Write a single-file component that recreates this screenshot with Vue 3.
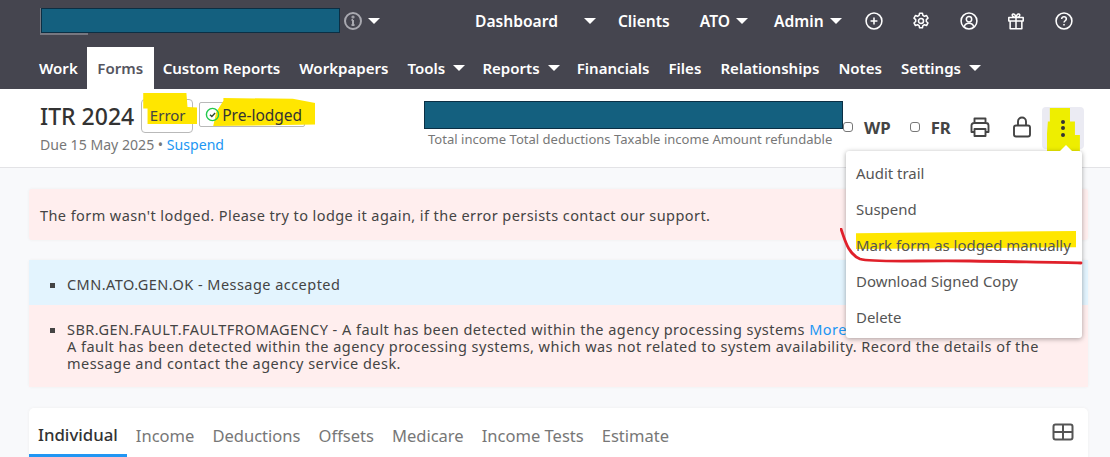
<script setup>
const mainNav = [
  { label: 'Work' }, { label: 'Forms', active: true }, { label: 'Custom Reports' }, { label: 'Workpapers' },
  { label: 'Tools', caret: true }, { label: 'Reports', caret: true }, { label: 'Financials' }, { label: 'Files' },
  { label: 'Relationships' }, { label: 'Notes' }, { label: 'Settings', caret: true }
]
const menu = ['Audit trail', 'Suspend', 'Mark form as lodged manually', 'Download Signed Copy', 'Delete']
const tabs = ['Individual', 'Income', 'Deductions', 'Offsets', 'Medicare', 'Income Tests', 'Estimate']
</script>

<template>
  <div class="page">
    <header class="header">
      <div class="top">
        <div class="brand">
          <div class="redact top-redact"></div>
          <svg class="info" width="20" height="20" viewBox="0 0 20 20" fill="none" stroke="#a9a9b0" stroke-width="2"><circle cx="10" cy="10" r="8"/><path d="M10 9v5M8.5 14h3M8.5 9H10"/><circle cx="10" cy="6" r=".6"/></svg>
          <span class="caret brand-caret"></span>
        </div>
        <nav class="top-nav">
          <span class="tn dash">Dashboard</span><span class="caret dash-caret"></span>
          <span class="tn clients">Clients</span>
          <span class="tn ato">ATO<span class="caret in"></span></span>
          <span class="tn admin">Admin<span class="caret in"></span></span>
          <svg class="ic" viewBox="0 0 20 20" fill="none" stroke="#fff" stroke-width="1.7"><circle cx="10" cy="10" r="8.800"/><path d="M10 6.200v7.600M6.200 10h7.600"/></svg>
          <svg class="ic gear" viewBox="0 0 20 20" fill="none" stroke="#fff" stroke-width="1.7"><path d="M8.400 1.400h3.200l.5 2.400 1.700 1 2.400-.8 1.600 2.800-1.900 1.700v2l1.900 1.700-1.600 2.800-2.400-.8-1.700 1-.5 2.400H8.400l-.5-2.400-1.700-1-2.400.8-1.600-2.800 1.900-1.700v-2L2.200 6.800l1.600-2.800 2.400.8 1.700-1z" stroke-linejoin="round"/><circle cx="10" cy="10" r="2.800"/></svg>
          <svg class="ic" viewBox="0 0 20 20" fill="none" stroke="#fff" stroke-width="1.700"><circle cx="10" cy="10" r="8.800"/><circle cx="10" cy="8" r="3"/><path d="M4.800 16.400c.6-2.600 2.700-3.800 5.200-3.800s4.600 1.200 5.200 3.800"/></svg>
          <svg class="ic" viewBox="0 0 20 20" fill="none" stroke="#fff" stroke-width="1.700"><path d="M2 6h16v4H2zM3.500 10v8.500h13V10M10 6v12.500M10 6C7.500 6 5.800 5 5.800 3.400S8.800.8 10 6zM10 6c2.500 0 4.200-1 4.200-2.600S11.200.8 10 6z" stroke-linejoin="round"/></svg>
          <svg class="ic" viewBox="0 0 20 20" fill="none" stroke="#fff" stroke-width="1.700"><circle cx="10" cy="10" r="8.800"/><path d="M7.400 7.800c0-1.500 1.200-2.500 2.600-2.500s2.600 1 2.600 2.400c0 2-2.600 2.100-2.600 4.100M10 13.400v1.500"/></svg>
        </nav>
      </div>
      <nav class="main-nav">
        <span v-for="n in mainNav" :key="n.label" class="mn" :class="{ active: n.active }">{{ n.label }}<span v-if="n.caret" class="caret mn-caret"></span></span>
      </nav>
    </header>

    <section class="sub">
      <div class="title-block">
        <div class="title-row">
          <h1>ITR 2024</h1>
          <span class="badge err"><mark class="hl hl-err"></mark><span class="bt">Error</span></span>
          <span class="badge pre">
            <mark class="hl hl-pre"></mark>
            <svg class="bt" width="15" height="15" viewBox="0 0 16 16" fill="none" stroke="#22c94e" stroke-width="1.500"><circle cx="8" cy="8" r="6.500"/><path d="M5.300 8.200l2 1.900 3.500-3.600" stroke="#2f4a2f"/></svg>
            <span class="bt">Pre-lodged</span>
          </span>
        </div>
        <div class="due">Due 15 May 2025 • <a>Suspend</a></div>
      </div>
      <div class="summary">
        <div class="redact sum-redact"></div>
        <div class="sum-text">Total income Total deductions Taxable income Amount refundable</div>
      </div>
      <div class="actions">
        <span class="chk first"></span><b class="cl wp">WP</b>
        <span class="chk"></span><b class="cl">FR</b>
        <svg class="act print" viewBox="0 0 22 22" fill="none" stroke="#444" stroke-width="1.900" stroke-linejoin="round"><path d="M5.500 7V2.500h11V7M5.500 16H2.500V9.500a2.500 2.500 0 0 1 2.500-2.500h12a2.500 2.500 0 0 1 2.500 2.500V16h-3"/><path d="M5.500 13h11v7h-11z"/></svg>
        <svg class="act lock" viewBox="0 0 22 22" fill="none" stroke="#444" stroke-width="1.900"><rect x="3" y="9.500" width="16" height="11" rx="2"/><path d="M7 9.500V5.500a4 4 0 0 1 8 0v4"/></svg>
        <div class="more">
          <mark class="hl hl-more"></mark>
          <span class="dots"><i></i><i></i><i></i></span>
        </div>
      </div>
    </section>

    <main class="content">
      <div class="alert red one">The form wasn't lodged. Please try to lodge it again, if the error persists contact our support.</div>
      <div class="group">
        <div class="blue-row">
          <ul><li>CMN.ATO.GEN.OK - Message accepted</li></ul>
        </div>
        <div class="red-row">
          <ul><li>SBR.GEN.FAULT.FAULTFROMAGENCY - A fault has been detected within the agency processing systems <a>More</a><br>A fault has been detected within the agency processing systems, which was not related to system availability. Record the details of the message and contact the agency service desk.</li></ul>
        </div>
      </div>
      <div class="card">
        <div class="tabs">
          <span v-for="(t, i) in tabs" :key="t" class="tab" :class="{ on: i === 0 }">{{ t }}</span>
        </div>
        <svg class="grid-ic" width="22" height="18" viewBox="0 0 22 18" fill="none" stroke="#555" stroke-width="2"><rect x="1.500" y="1.500" width="19" height="15" rx="2"/><path d="M1.500 9h19M11 1.500v15"/></svg>
      </div>
    </main>

    <div class="menu">
      <span class="arrow"></span>
      <div v-for="(m, i) in menu" :key="m" class="mi"><mark v-if="i === 2" class="hl hl-mark"></mark><span class="bt">{{ m }}</span></div>
    </div>

    <svg class="scribble" width="250" height="50" viewBox="0 0 250 50" fill="none"><path d="M1 1C5 12 8 26 20 31c14 4 60 1 110 2 50 1 90 1 111 2" stroke="#e0202a" stroke-width="2.800" stroke-linecap="round"/></svg>
  </div>
</template>

<style>
html, body { margin: 0; background: #f8f9fb; }
</style>

<style scoped>
.page { position: relative; width: 1110px; height: 457px; overflow: hidden; background: #f8f9fb; font-family: "Noto Sans", "Open Sans", sans-serif; color: #444; }
.header { height: 89px; background: #45454f; color: #fff; font-weight: 600; display: flex; flex-direction: column; }
.top { height: 47px; padding-bottom: 6px; box-sizing: border-box; display: flex; align-items: center; }
.brand { display: flex; align-items: center; margin-left: 41px; }
.redact { background: #14607f; border: 1px solid #0b2f44; box-sizing: border-box; }
.top-redact { position: relative; width: 299px; height: 25px; }
.top-redact::before { content: ""; position: absolute; left: -2px; top: -1px; bottom: -3px; width: 1px; background: #777780; }
.top-redact::after { content: ""; position: absolute; left: -2px; bottom: -3px; width: 48px; height: 2px; background: #777780; }
.info { margin-left: 3px; }
.caret { display: inline-block; width: 0; height: 0; border-left: 6px solid transparent; border-right: 6px solid transparent; border-top: 6px solid #fff; }
.brand-caret { margin-left: 5px; }
.top-nav { display: flex; align-items: center; font-size: 15.600px; margin-left: 95px; }
.tn { display: inline-flex; align-items: center; }
.dash-caret { margin-left: 26px; margin-right: 22px; }
.clients { margin-right: 30px; }
.ato { margin-right: 26px; }
.in { margin-left: 6px; }
.ic { width: 18px; height: 18px; }
.admin { margin-right: 23px; }
.ic + .ic { margin-left: 29.500px; }
.main-nav { height: 42px; display: flex; align-items: stretch; padding-left: 29.500px; font-size: 15.050px; }
.mn { padding: 0 9.550px; display: flex; align-items: center; }
.mn.active { background: #fff; color: #55555f; padding: 0 10.500px; margin: 0 -0.500px; }
.mn-caret { margin-left: 8px; margin-right: -2px; }
.sub { height: 79px; box-sizing: border-box; background: #fff; border-bottom: 1px solid #e3e3e6; display: flex; position: relative; }
.title-block { margin-left: 40px; width: 384px; }
.title-row { display: flex; align-items: flex-start; margin-top: 10px; }
h1 { margin: 2px 0 0; font-size: 23px; line-height: 30px; font-weight: 500; color: #333; }
.badge { position: relative; display: inline-flex; align-items: center; gap: 2px; box-sizing: border-box; font-size: 15.500px; border: 1px solid #b9b9b9; color: #444; }
.err { width: 52px; height: 34px; margin-left: 7px; border-radius: 4px; justify-content: center; padding: 0 0 3px 1px; font-size: 15px; }
.pre { width: 106px; height: 25px; margin-left: 6px; margin-top: 3px; border-radius: 2px; padding-left: 5px; color: #333; }
.bt { position: relative; }
.hl { position: absolute; background: #ffe600; }
.hl-err { left: 1px; top: -7px; width: 54px; height: 31px; clip-path: polygon(0 0, 80% 0, 82% 45%, 100% 47%, 100% 100%, 8% 100%, 8% 50%, 0 50%); }
.hl-pre { left: 13px; top: -5px; width: 102px; height: 28px; clip-path: polygon(10% 0, 78% 3%, 100% 18%, 100% 95%, 0 100%, 3% 50%, 10% 10%); }
.due { font-size: 14.100px; color: #777; margin-top: 2px; }
.due a, .red-row a { color: #2196f3; }
.summary { margin-top: 12px; width: 418px; }
.sum-redact { width: 419px; height: 28px; }
.sum-text { font-size: 13.050px; color: #777; margin: 1px 0 0 4px; white-space: nowrap; }
.actions { display: flex; align-items: center; height: 40px; margin-top: 18px; }
.chk { width: 10px; height: 10px; border: 1px solid #777; border-radius: 3px; box-sizing: border-box; display: block; }
.first { margin-left: 1px; }
.cl { font-size: 16.800px; color: #444; margin-left: 11px; font-weight: 700; }
.wp { margin-right: 19px; }
.print { width: 22px; height: 22px; margin-left: 18px; }
.lock { width: 22px; height: 22px; margin-left: 20px; }
.act { display: block; }
.more { position: relative; align-self: flex-start; width: 42px; height: 42px; margin-left: 9px; background: #ebebf3; border-radius: 4px; display: flex; align-items: center; justify-content: center; }
.hl-more { left: 5px; top: 1px; width: 33px; height: 45px; background: #eeee00; clip-path: polygon(9% 0, 70% 0, 70% 30%, 85% 30%, 85% 60%, 100% 60%, 100% 100%, 0 100%, 0 60%, 3% 30%, 9% 30%); }
.dots { position: relative; display: flex; flex-direction: column; gap: 2.500px; }
.dots i { width: 4px; height: 4px; border-radius: 50%; background: #333; display: block; }
.content { padding: 21px 22px 0 29px; }
.alert.one { height: 51px; background: #ffeeee; border-radius: 3px; display: flex; align-items: center; padding-left: 11px; font-size: 14.500px; letter-spacing: .42px; box-shadow: 0 0 3px #eee; }
.group { margin-top: 20px; border-radius: 3px; font-size: 14.500px; letter-spacing: .46px; line-height: 17.200px; color: #444; box-shadow: 0 0 3px #eee; }
.group ul { margin: 0; padding: 0 0 0 38px; list-style: square; }
.blue-row { background: #e3f4fe; height: 45px; padding-top: 16px; box-sizing: border-box; }
.red-row { background: #ffeeee; height: 82px; padding-top: 16px; padding-right: 40px; box-sizing: border-box; }
.card { margin-top: 21px; height: 60px; background: #fff; border-radius: 5px; display: flex; box-shadow: 0 0 3px #eee; position: relative; }
.tabs { display: flex; height: 49px; align-items: stretch; font-size: 16.550px; color: #777; }
.tab { padding: 6px 9px 0; display: flex; align-items: center; box-sizing: border-box; }
.tab.on { color: #333; border-bottom: 3px solid #2196f3; font-weight: 500; font-size: 16.800px; }
.grid-ic { position: absolute; left: 1023px; top: 15px; }
.menu { position: absolute; left: 846px; top: 151px; width: 236px; height: 187px; padding-top: 4px; box-sizing: border-box; background: #fff; border-radius: 3px; box-shadow: 0 1px 5px rgba(0,0,0,.35); font-size: 14.950px; color: #555; }
.mi { position: relative; height: 36px; display: flex; align-items: center; padding-left: 10px; white-space: nowrap; }
.arrow { position: absolute; top: -6px; left: 214px; width: 0; height: 0; border-left: 6px solid transparent; border-right: 6px solid transparent; border-bottom: 6px solid #fff; }
.hl-mark { left: 10px; top: 4px; width: 220px; height: 18px; clip-path: polygon(0 12%, 100% 0, 100% 90%, 0 100%); }
.scribble { position: absolute; left: 840px; top: 228px; }
</style>
